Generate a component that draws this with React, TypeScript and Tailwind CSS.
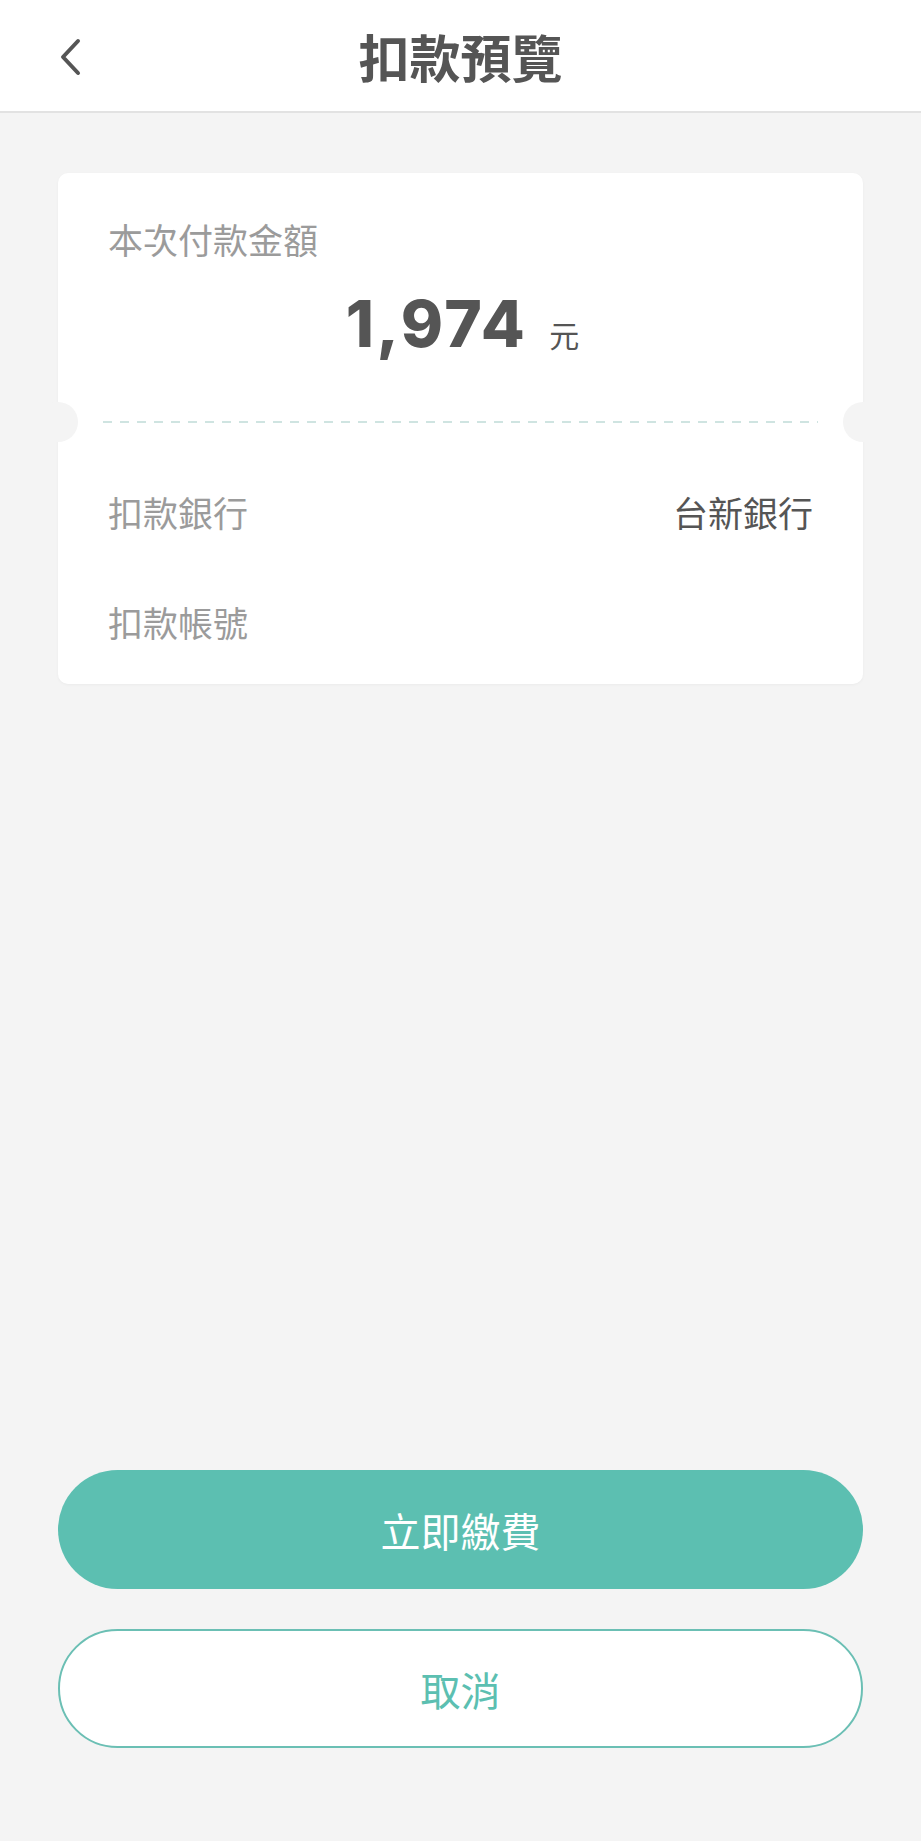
const cjk = "font-['Noto_Sans_CJK_TC','Noto_Sans',sans-serif]";

function BackIcon() {
  return (
    <svg width="24" height="38" viewBox="0 0 24 38" fill="none">
      <path
        d="M20 3 L5 19 L20 35"
        stroke="#555555"
        strokeWidth="4"
        strokeLinecap="round"
        strokeLinejoin="round"
      />
    </svg>
  );
}

function InfoRow({ label, value }: { label: string; value?: string }) {
  return (
    <div className="flex items-center justify-between h-[40px]">
      <span className="text-[35px] leading-[40px] text-[#9b9b9b]">{label}</span>
      {value && (
        <span className="text-[35px] leading-[40px] text-[#555555]">{value}</span>
      )}
    </div>
  );
}

export default function App() {
  return (
    <div className={`min-h-screen flex flex-col bg-[#f4f4f4] ${cjk}`}>
      {/* header */}
      <header className="h-[113px] bg-white border-b-2 border-[#e2e2e2] grid grid-cols-[1fr_auto_1fr] items-center px-[58px]">
        <button className="w-[40px] h-[60px] flex items-center mt-[2px]">
          <BackIcon />
        </button>
        <h1 className="text-[51px] font-bold text-[#555555] leading-none mt-[2px]">
          扣款預覽
        </h1>
        <div />
      </header>

      {/* ticket card */}
      <div className="mx-[58px] mt-[60px] bg-white rounded-[10px] shadow-[0_1px_3px_rgba(0,0,0,0.04)] flex flex-col">
        <div className="px-[50px] pt-[46px]">
          <p className="text-[35px] leading-[40px] text-[#9b9b9b]">本次付款金額</p>
          <div className="mt-[33px] flex items-baseline justify-center gap-[22px] pl-[4px]">
            <span className="font-['Inter',sans-serif] font-extrabold text-[64px] leading-[64px] text-[#555555] tracking-[2.5px]">
              1,974
            </span>
            <span className="text-[30px] leading-none text-[#555555]">元</span>
          </div>
        </div>

        <div className="relative mt-[65px] h-[2px] mx-[45px]">
          <div className="h-[2px] bg-[repeating-linear-gradient(90deg,#cfe4e1_0_9px,transparent_9px_17px)]" />
          <div className="absolute -left-[65px] -top-[19px] w-[40px] h-[40px] rounded-full bg-[#f4f4f4]" />
          <div className="absolute -right-[65px] -top-[19px] w-[40px] h-[40px] rounded-full bg-[#f4f4f4]" />
        </div>

        <div className="px-[50px] pt-[69px] pb-[42px] flex flex-col gap-[70px]">
          <InfoRow label="扣款銀行" value="台新銀行" />
          <InfoRow label="扣款帳號" />
        </div>
      </div>

      <div className="flex-1" />

      {/* actions */}
      <div className="mx-[58px] pb-[93px] flex flex-col gap-[40px]">
        <button className="h-[119px] rounded-full bg-[#5cbfb1] text-white text-[40px] leading-none">
          立即繳費
        </button>
        <button className="h-[119px] rounded-full bg-white border-2 border-[#6bbfb4] text-[#5cbfb1] text-[40px] leading-none">
          取消
        </button>
      </div>
    </div>
  );
}
